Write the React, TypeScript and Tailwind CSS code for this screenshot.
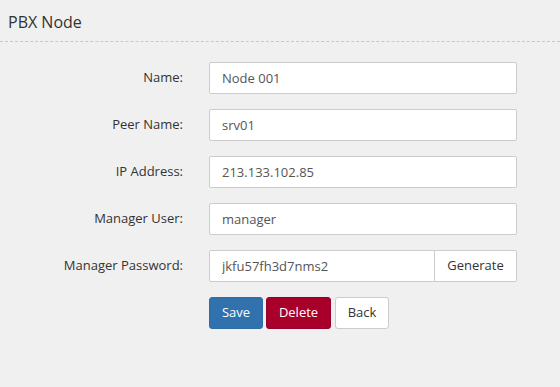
import { ReactNode } from "react";

function Row({ label, children }: { label: string; children: ReactNode }) {
    return (
        <div className="flex items-center h-[32px]">
            <label className="w-[183px] shrink-0 text-right text-[13px] text-[#333]">{label}</label>
            <div className="ml-[26px] w-[308px]">{children}</div>
        </div>
    );
}

function TextInput({ value }: { value: string }) {
    return (
        <input
            readOnly
            value={value}
            className="w-full h-[32px] px-[12px] bg-white border border-[#ccc] rounded-[2px] text-[13px] text-[#555] outline-none"
        />
    );
}

export default function App() {
    return (
        <main
            className="min-h-[387px] w-full bg-[#f0f0f0] text-[#333]"
            style={{ fontFamily: '"Open Sans", "Noto Sans", sans-serif' }}
        >
            <div className="h-[42px] px-[8px] border-b border-dashed border-[#c8c8c8] flex items-center">
                <h1 className="text-[16px] pt-[2px]">PBX Node</h1>
            </div>

            <form className="mt-[20px] flex flex-col gap-[15px]">
                <Row label="Name:">
                    <TextInput value="Node 001" />
                </Row>
                <Row label="Peer Name:">
                    <TextInput value="srv01" />
                </Row>
                <Row label="IP Address:">
                    <TextInput value="213.133.102.85" />
                </Row>
                <Row label="Manager User:">
                    <TextInput value="manager" />
                </Row>
                <Row label="Manager Password:">
                    <div className="flex h-[32px]">
                        <input
                            readOnly
                            value="jkfu57fh3d7nms2"
                            className="flex-1 min-w-0 h-full px-[12px] bg-white border border-[#ccc] rounded-l-[2px] text-[13px] text-[#555] outline-none"
                        />
                        <button
                            type="button"
                            className="w-[82px] h-full bg-white border border-l-0 border-[#ccc] rounded-r-[2px] text-[13px] text-[#333]"
                        >
                            Generate
                        </button>
                    </div>
                </Row>
                <div className="flex h-[32px] ml-[209px] gap-[3px]">
                    <button type="button" className="w-[54px] h-full rounded-[3px] bg-[#3071ae] border border-[#2e6da4] text-white text-[13px]">
                        Save
                    </button>
                    <button type="button" className="w-[65px] h-full rounded-[3px] bg-[#a8002b] border border-[#96002a] text-white text-[13px]">
                        Delete
                    </button>
                    <button type="button" className="ml-[1px] w-[54px] h-full rounded-[3px] bg-white border border-[#ccc] text-[#333] text-[13px]">
                        Back
                    </button>
                </div>
            </form>
        </main>
    );
}
